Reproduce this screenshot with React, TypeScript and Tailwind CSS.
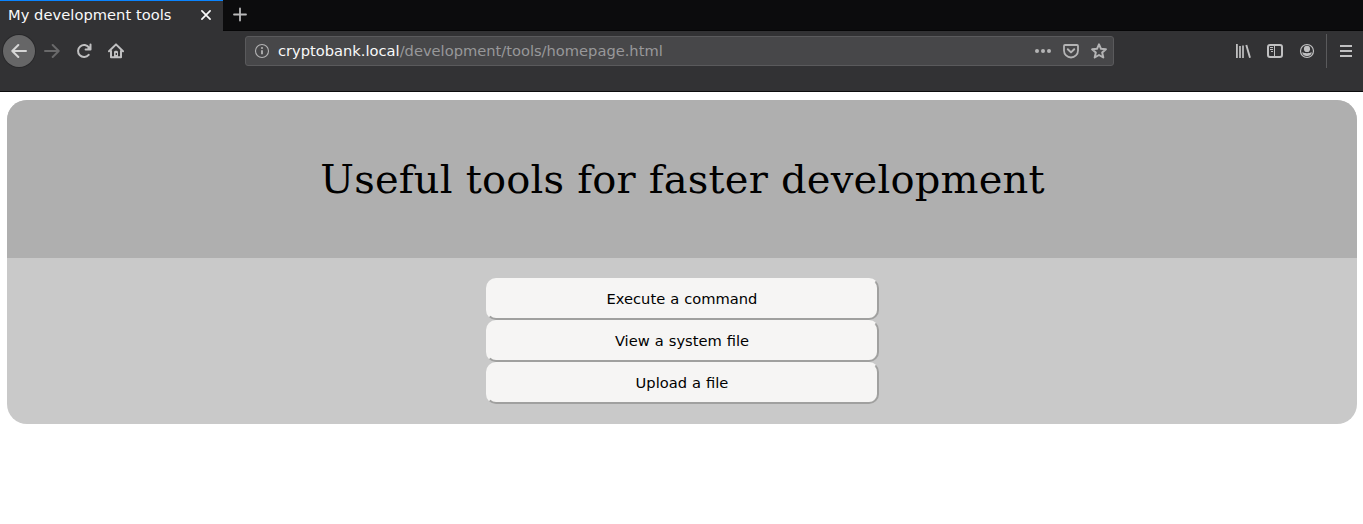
import type { ReactNode } from 'react';

function Icon({ children, className = '' }: { children: ReactNode; className?: string }) {
  return (
    <svg viewBox="0 0 16 16" className={`size-4 shrink-0 ${className}`} fill="none" stroke="currentColor" strokeWidth="2" strokeLinecap="round" strokeLinejoin="round">
      {children}
    </svg>
  );
}

function TabBar() {
  return (
    <div className="flex h-[31px] border-b border-[#060607] bg-[#0c0c0d]">
      <div className="flex h-[31px] w-[223px] items-center border-t border-[#0a84ff] bg-[#323234] pr-[9px] pb-px pl-2 text-[#f9f9fa]">
        <span className="flex-1 pb-px tracking-[0.04px] whitespace-nowrap">My development tools</span>
        <Icon className="text-[#f9f9fa]">
          <path d="M3.900 2.900l8.200 8.200M12.100 2.900L3.900 11.100" strokeWidth="1.700" />
        </Icon>
      </div>
      <div className="flex h-[29px] w-[33px] items-center justify-center text-[#b9b9ba]">
        <Icon><path d="M8 1.500v12M2 7.500h12" strokeWidth="1.800" /></Icon>
      </div>
    </div>
  );
}

function AddressBar() {
  return (
    <div className="flex h-[30px] w-[869px] items-center rounded-[3px] border border-[#5a5a5c] bg-[#474749] pr-[6px] pl-2 text-[#b4b4b5]">
      <Icon>
        <circle cx="8" cy="8" r="6.500" strokeWidth="1.100" />
        <path d="M8 7.200v4" strokeWidth="1.800" strokeLinecap="butt" />
        <circle cx="8" cy="5" r="1" fill="currentColor" stroke="none" />
      </Icon>
      <span className="ml-2 flex-1 whitespace-nowrap text-[#98989a]">
        <span className="text-[#f9f9fa]">cryptobank.local</span>/development/tools/homepage.html
      </span>
      <div className="flex gap-3">
        <Icon>
          <g fill="currentColor" stroke="none">
            <circle cx="2" cy="8" r="2" />
            <circle cx="8" cy="8" r="2" />
            <circle cx="14" cy="8" r="2" />
          </g>
        </Icon>
        <Icon>
          <path d="M2 2h12a1 1 0 0 1 1 1v4.500a7 7 0 0 1-14 0V3a1 1 0 0 1 1-1z" strokeWidth="1.800" />
          <path d="M4.800 6.300L8 9.400l3.200-3.100" />
        </Icon>
        <Icon>
          <path d="M8 1.300l2 4.500 4.900.5-3.700 3.300 1.100 4.900L8 12l-4.300 2.500 1.100-4.900L1.100 6.300 6 5.800z" strokeWidth="2" />
        </Icon>
      </div>
    </div>
  );
}

function Toolbar() {
  return (
    <div className="flex h-[61px] items-start border-b border-[#0c0c0d] bg-[#323234] pt-[3px] text-[#c0c0c1]">
      <div className="flex h-[34px] w-[245px] shrink-0 items-center gap-4 pl-[3px]">
        <div className="mr-[-7px] flex size-8 items-center justify-center rounded-full bg-[#666667] text-[#d6d6d6] shadow-[0_0_0_1px_#29292b]">
          <Icon><path d="M15 8H1.700M7.300 2L1.300 8l6 6" /></Icon>
        </div>
        <Icon className="text-[#69696a]"><path d="M1 8h13.300M8.700 2l6 6-6 6" /></Icon>
        <Icon>
          <path d="M12.700 11.800a6 6 0 1 1 .3-7.200" />
          <path d="M14.500 1.600V6.500H9.600" />
          <path d="M14 3v3h-3z" fill="currentColor" stroke="none" />
        </Icon>
        <Icon>
          <path d="M1 8.300L8 1.400l7 6.900M3 8v6.300h10V8" />
          <path d="M6 14V9.100c0-1.700 4-1.700 4 0V14z" fill="currentColor" stroke="none" />
          <path d="M8.300 10v2" stroke="#323234" strokeWidth="1.300" strokeLinecap="butt" />
        </Icon>
      </div>
      <div className="flex h-[34px] items-center">
        <AddressBar />
      </div>
      <div className="ml-auto flex h-[34px] items-center gap-4 pr-[9px]">
        <Icon>
          <g strokeLinecap="butt">
            <path d="M1.900 1v14" strokeWidth="1.800" />
            <path d="M5 3v12M8 2.500V15" strokeWidth="1.700" />
            <path d="M11.300 2l3.700 12.700" strokeWidth="1.900" />
          </g>
        </Icon>
        <Icon>
          <rect x="1" y="2" width="14" height="12" rx="2" />
          <path d="M7.500 2v12" strokeWidth="1" />
          <path d="M3 4.500h3M3 6.500h3M4 8.500h2" strokeWidth="1" strokeLinecap="butt" />
        </Icon>
        <Icon>
          <circle cx="8" cy="8" r="6.500" strokeWidth="1.200" />
          <circle cx="8" cy="5.900" r="3.100" fill="currentColor" stroke="none" />
          <path d="M3.500 9c1.300 1.600 7.700 1.600 9 0 .6 2.300-2 4.200-4.500 4.200S2.900 11.300 3.500 9z" fill="currentColor" stroke="none" />
        </Icon>
        <div className="mr-[-5px] ml-[-5px] h-[34px] w-px bg-[#5a5a5c]" />
        <Icon><path d="M2 3h12M2 8h12M2 13h12" strokeLinecap="butt" /></Icon>
      </div>
    </div>
  );
}

const tools = ['Execute a command', 'View a system file', 'Upload a file'];

export default function App() {
  return (
    <div className="h-[524px] overflow-hidden bg-white font-['DejaVu_Sans',sans-serif] text-[14.667px]">
      <TabBar />
      <Toolbar />
      <main className="mt-2 ml-[7px] w-[1350px] overflow-hidden rounded-[20px] bg-[#c9c9c9]">
        <header className="flex h-[158px] items-center justify-center bg-[#afafaf]">
          <h1 className="pl-px font-['DejaVu_Serif',serif] text-[40px] leading-[48px] tracking-[0.210px] text-black">Useful tools for faster development</h1>
        </header>
        <div className="flex flex-col items-center py-5 pl-px">
          {tools.map((label) => (
            <button key={label} className="h-[42px] w-[393px] rounded-[10px] border-2 border-t-[#f6f5f4] border-r-[#a0a09f] border-b-[#a0a09f] border-l-[#f6f5f4] bg-[#f6f5f4] pr-px text-[14.667px] [word-spacing:0.4px] text-black">
              {label}
            </button>
          ))}
        </div>
      </main>
    </div>
  );
}
